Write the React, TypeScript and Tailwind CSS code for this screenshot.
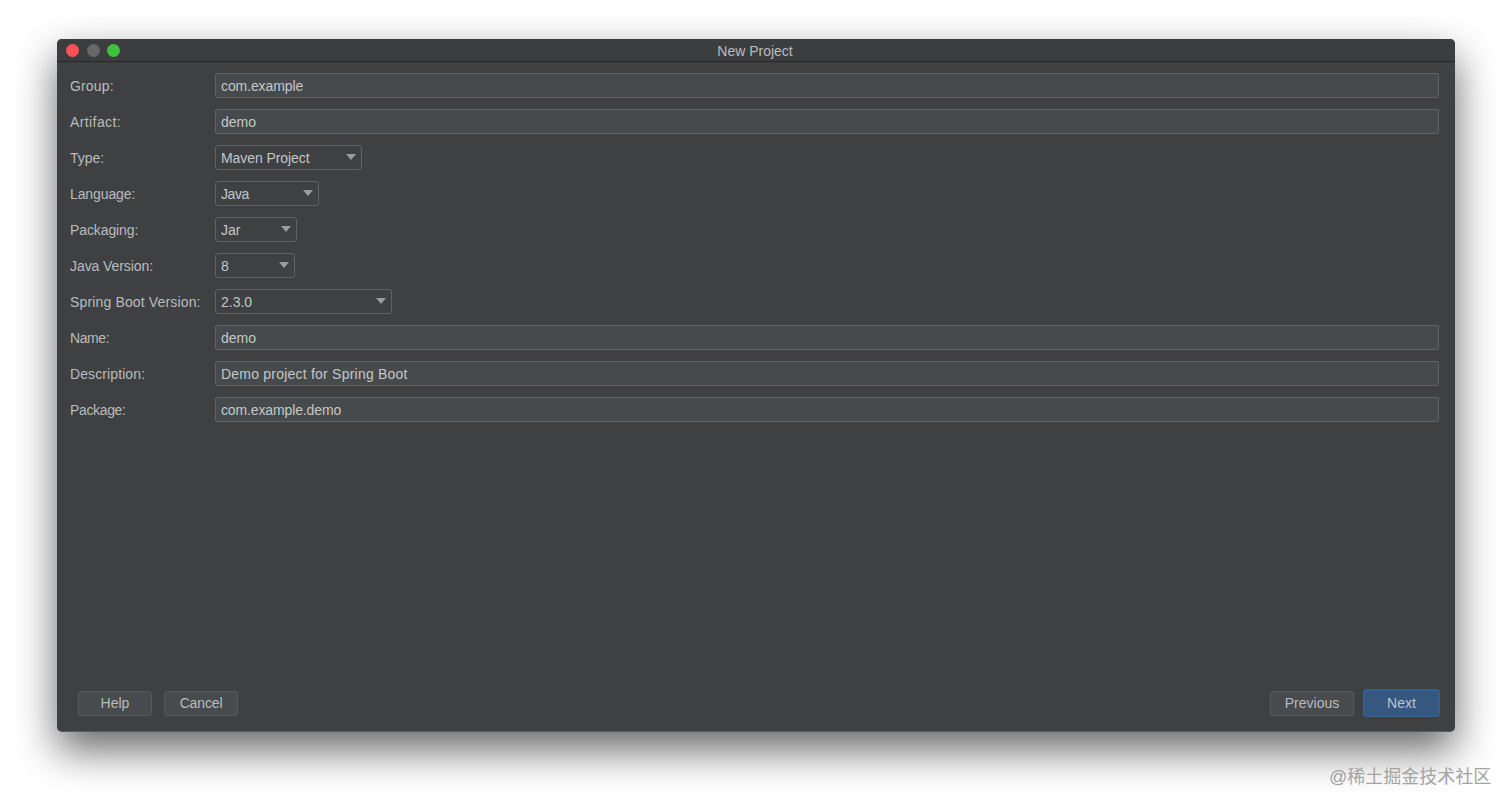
const font = { fontFamily: '"Liberation Sans", "Noto Sans CJK SC", sans-serif' };

function Label({ text, tracking }: { text: string; tracking: string }) {
  return <div className={`w-[145px] shrink-0 pt-[2px] text-[14px] leading-[24px] text-[#b9bcbd] ${tracking}`}>{text}</div>;
}

type RowProps = { label: string; value: string; labelTracking?: string; valueTracking?: string };

function TextRow({ label, value, labelTracking = "", valueTracking = "" }: RowProps) {
  return (
    <div className="flex h-[24px] items-center">
      <Label text={label} tracking={labelTracking} />
      <div className={`h-[25px] flex-1 rounded-[2px] border border-[#5f6365] bg-[#464a4c] px-[5px] text-[14px] leading-[25px] text-[#c4c7c8] ${valueTracking}`}>
        {value}
      </div>
    </div>
  );
}

function SelectRow({ label, value, widthClass, labelTracking = "", valueTracking = "" }: RowProps & { widthClass: string }) {
  return (
    <div className="flex h-[24px] items-center">
      <Label text={label} tracking={labelTracking} />
      <div className={`flex h-[25px] items-center justify-between rounded-[3px] border border-[#5f6365] bg-[#3e4042] pl-[5px] pr-[5px] text-[14px] text-[#c4c7c8] ${widthClass}`}>
        <span className={`pt-[2px] leading-[23px] ${valueTracking}`}>{value}</span>
        <svg width="10" height="6" viewBox="0 0 10 6">
          <path d="M0 0H10L5 6Z" fill="#9a9d9f" />
        </svg>
      </div>
    </div>
  );
}

function Button({ text, widthClass, tracking = "" }: { text: string; widthClass: string; tracking?: string }) {
  return (
    <div className={`flex h-[25px] items-center justify-center rounded-[3px] border border-[#565a5c] bg-[#474b4d] text-[14px] text-[#b9bcbd] ${widthClass} ${tracking}`}>
      {text}
    </div>
  );
}

export default function App() {
  return (
    <div className="relative h-[808px] w-[1512px] overflow-hidden bg-white pl-[57px] pt-[39px]" style={font}>
      <div className="flex h-[693px] w-[1398px] flex-col rounded-[5px] border-b border-[#5a5d5f] bg-[#3e4042] shadow-[0_18px_42px_rgba(0,0,0,0.6)]">
        <div className="relative flex h-[23px] shrink-0 items-center gap-[7.5px] rounded-t-[5px] border-b border-[#26282a] bg-[#3b3d3f] pl-[9px]">
          <span className="h-[13px] w-[13px] rounded-full bg-[#fb5254]" />
          <span className="h-[13px] w-[13px] rounded-full bg-[#656769]" />
          <span className="h-[13px] w-[13px] rounded-full bg-[#3dc23c]" />
          <div className="absolute left-0 right-[2px] top-0 text-center text-[14px] leading-[25px] text-[#b9bcbd]">New Project</div>
        </div>
        <div className="flex flex-col gap-[12px] pl-[13px] pr-[16px] pt-[11px]">
          <TextRow label="Group:" value="com.example" labelTracking="tracking-[0.15px]" valueTracking="tracking-[-0.1px]" />
          <TextRow label="Artifact:" value="demo" labelTracking="tracking-[0.4px]" />
          <SelectRow label="Type:" value="Maven Project" widthClass="w-[147px]" valueTracking="tracking-[-0.08px]" />
          <SelectRow label="Language:" value="Java" widthClass="w-[104px]" labelTracking="tracking-[-0.1px]" valueTracking="tracking-[-0.4px]" />
          <SelectRow label="Packaging:" value="Jar" widthClass="w-[82px]" labelTracking="tracking-[-0.1px]" />
          <SelectRow label="Java Version:" value="8" widthClass="w-[80px]" labelTracking="tracking-[-0.08px]" />
          <SelectRow label="Spring Boot Version:" value="2.3.0" widthClass="w-[177px]" labelTracking="tracking-[0.15px]" />
          <TextRow label="Name:" value="demo" labelTracking="tracking-[-0.4px]" />
          <TextRow label="Description:" value="Demo project for Spring Boot" labelTracking="tracking-[0.1px]" valueTracking="tracking-[0.22px]" />
          <TextRow label="Package:" value="com.example.demo" labelTracking="tracking-[-0.35px]" valueTracking="tracking-[-0.13px]" />
        </div>
        <div className="mt-auto flex items-center justify-between pb-[14px] pl-[21px] pr-[15px]">
          <div className="flex gap-[12px]">
            <Button text="Help" widthClass="w-[74px]" />
            <Button text="Cancel" widthClass="w-[74px]" tracking="tracking-[-0.15px]" />
          </div>
          <div className="flex items-center gap-[9px]">
            <Button text="Previous" widthClass="w-[84px]" />
            <div className="flex h-[28px] w-[77px] items-center justify-center rounded-[4px] border-2 border-[#33608f] bg-[#365880] text-[14px] text-[#b9c5d2]">
              Next
            </div>
          </div>
        </div>
      </div>
      <div className="absolute left-[1329px] top-[765px] text-[18px] leading-[24px] text-[#a3a3a3]">@稀土掘金技术社区</div>
    </div>
  );
}
